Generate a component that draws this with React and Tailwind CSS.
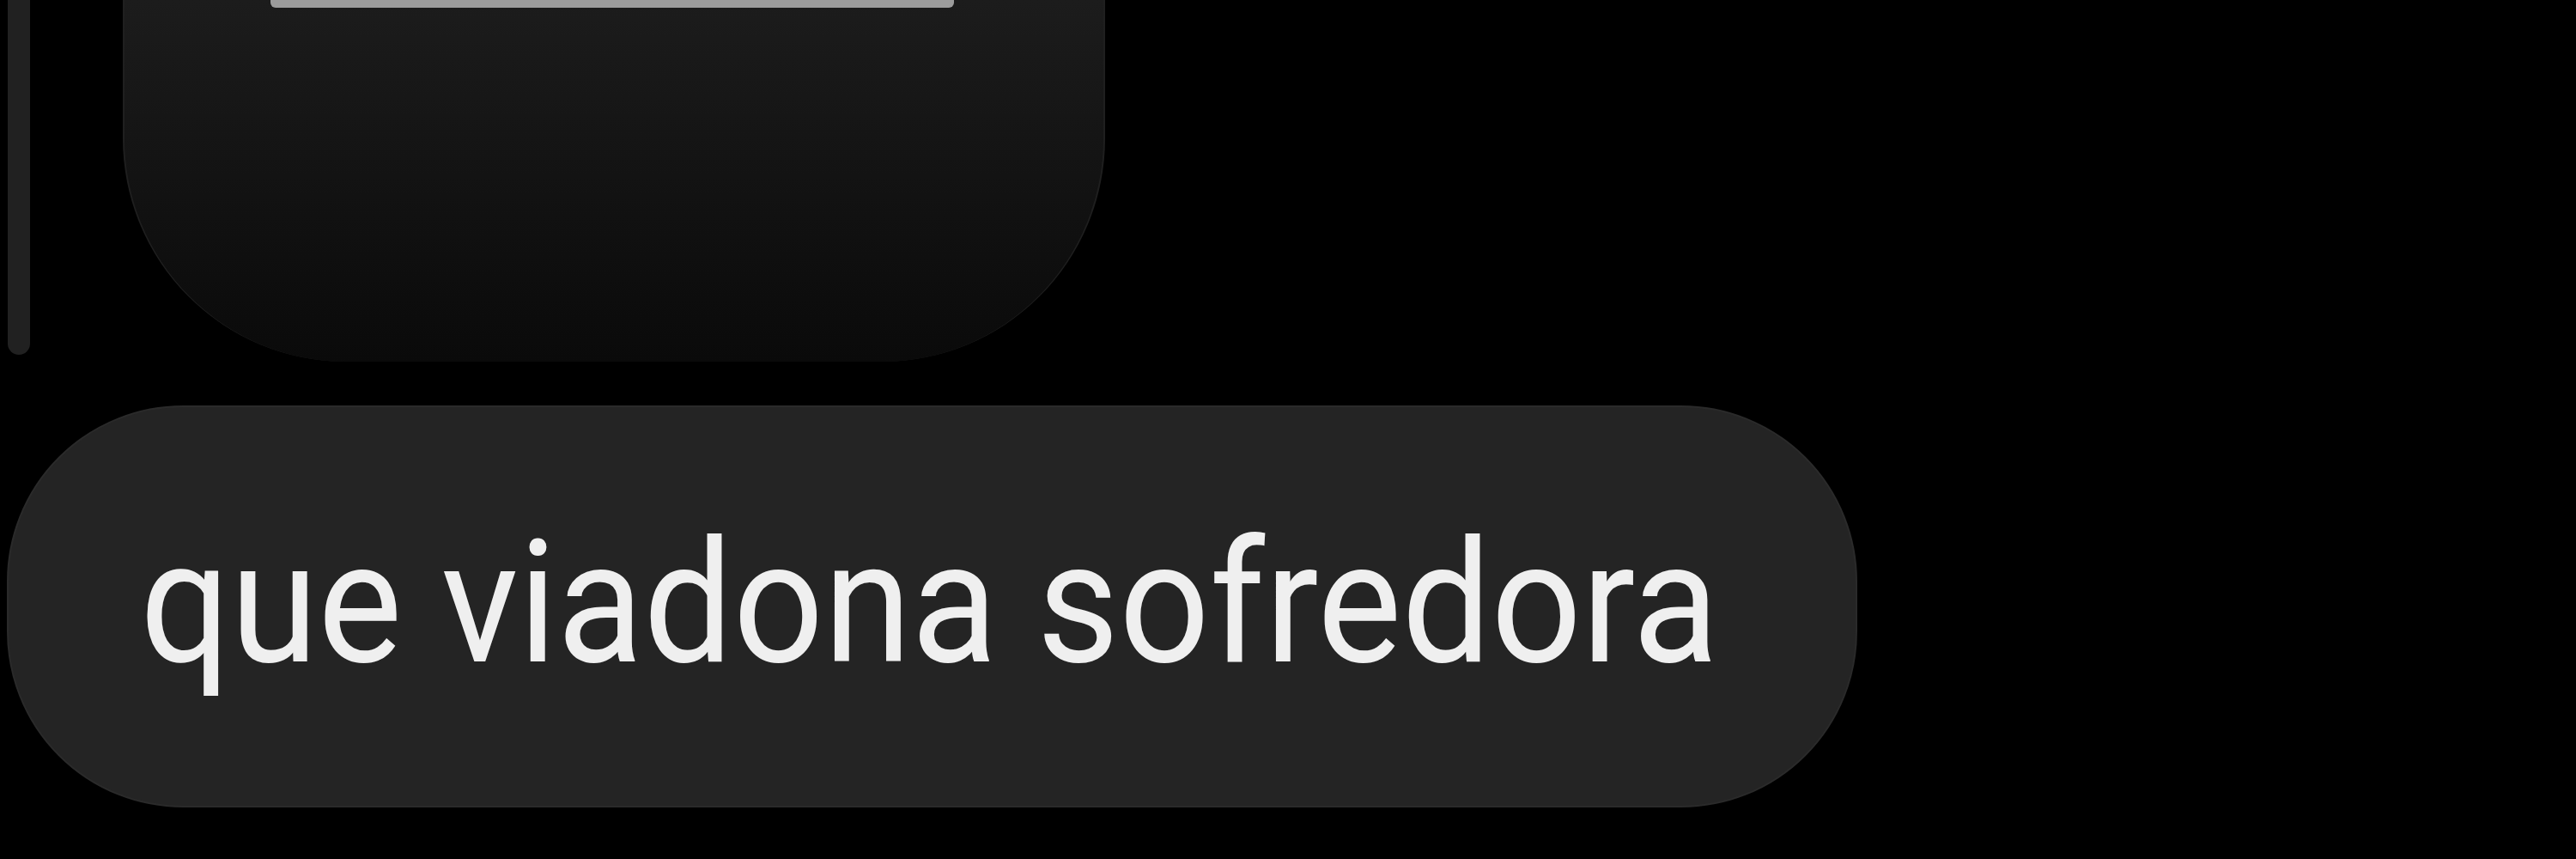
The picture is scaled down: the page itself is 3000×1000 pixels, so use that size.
import React from 'react';

// Chat thread fragment: quoted media bubble on top, plain text reply below
const Thread = () => {
  return (
    <div className="w-[3000px] h-[1000px] bg-black overflow-hidden flex flex-col">
      <div className="flex items-start">
        {/* thread rail */}
        <div className="ml-[9px] w-[26px] h-[413px] rounded-b-full bg-[#212121]" />

        {/* quoted attachment bubble, top cut off by the scroll */}
        <div className="ml-[108px] w-[1144px] h-[421px] rounded-b-[260px] bg-linear-to-b from-[#1c1c1c] to-[#0a0a0a] border-x-2 border-[#1f1f1f] flex flex-col">
          <div className="ml-[170px] w-[796px] h-[9px] rounded-b-[6px] bg-[#9c9c9c]" />
        </div>
      </div>

      <div className="mt-[51px] ml-[8px] w-[2155px] h-[468px] rounded-[205px] bg-[#242424] border-2 border-[#2a2a2a] flex items-center pl-[153px]">
        <span className="font-['Roboto',sans-serif] text-[185px] leading-none text-[#efefef] whitespace-nowrap scale-y-[1.07] origin-[50%_84%]">
          que viadona sofredora
        </span>
      </div>
    </div>
  );
};

export default function App() {
  return <Thread />;
}
